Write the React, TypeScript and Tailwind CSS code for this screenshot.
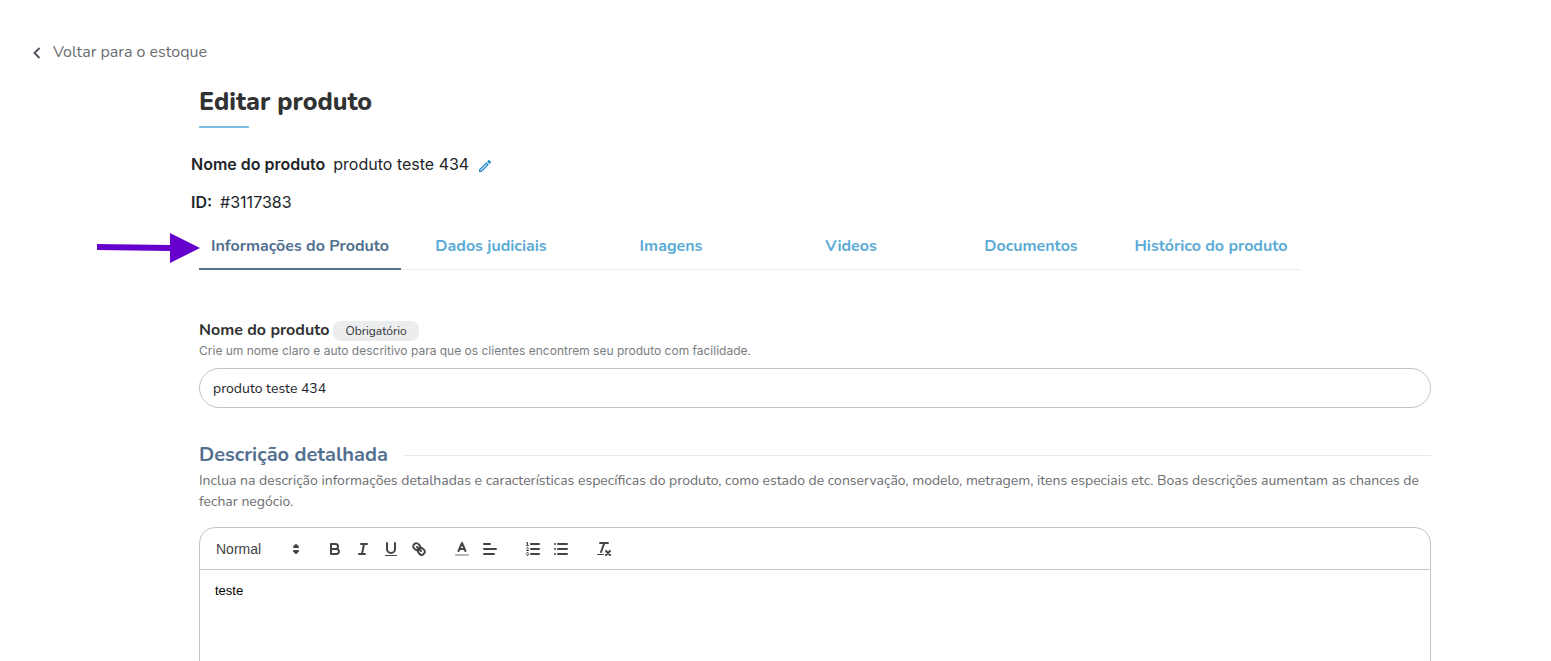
import React, { useState } from 'react';

const TABS = [
  'Informações do Produto',
  'Dados judiciais',
  'Imagens',
  'Videos',
  'Documentos',
  'Histórico do produto',
];

interface ToolButtonProps {
  label: string;
  children: React.ReactNode;
}

const ToolIcon: React.FC<{ children: React.ReactNode }> = ({ children }) => (
  <svg
    viewBox="0 0 18 18"
    className="h-[18px] w-[18px]"
    fill="none"
    stroke="#444"
    strokeWidth="2"
    strokeLinecap="round"
    strokeLinejoin="round"
  >
    {children}
  </svg>
);

const ToolButton: React.FC<ToolButtonProps> = ({ label, children }) => (
  <button
    type="button"
    aria-label={label}
    className="flex h-6 w-7 items-center justify-center"
  >
    <ToolIcon>{children}</ToolIcon>
  </button>
);

const EditorToolbar: React.FC = () => (
  <div className="flex gap-[15px] border-b border-[#c4c4c4] px-2 pb-2 pt-[9px] font-['Liberation_Sans',sans-serif]">
    <div className="relative w-[98px]">
      <select
        aria-label="Formato"
        defaultValue="normal"
        className="h-6 w-full appearance-none bg-transparent pl-2 text-sm text-[#444] focus:outline-none"
      >
        <option value="h1">Heading 1</option>
        <option value="h2">Heading 2</option>
        <option value="normal">Normal</option>
      </select>
      <span className="pointer-events-none absolute inset-y-0 right-px flex items-center">
        <ToolIcon>
          <polygon fill="#444" points="7 11 9 13 11 11 7 11" />
          <polygon fill="#444" points="7 7 9 5 11 7 7 7" />
        </ToolIcon>
      </span>
    </div>

    <div className="flex">
      <ToolButton label="Negrito">
        <path d="M5,4H9.5A2.5,2.5,0,0,1,12,6.5v0A2.5,2.5,0,0,1,9.5,9H5V4Z" />
        <path d="M5,9h5.5A2.5,2.5,0,0,1,13,11.5v0A2.5,2.5,0,0,1,10.5,14H5V9Z" />
      </ToolButton>
      <ToolButton label="Itálico">
        <path d="M7 4H13M5 14H11M8 14L10 4" />
      </ToolButton>
      <ToolButton label="Sublinhado">
        <path d="M5,3V9a4,4,0,0,0,4,4h0a4,4,0,0,0,4-4V3" />
        <rect fill="#444" stroke="none" x="3" y="15" width="12" height="1" rx="0.5" />
      </ToolButton>
      <ToolButton label="Link">
        <path d="M7 7L11 11" />
        <path d="M8.9,4.577a3.476,3.476,0,0,1,.36,4.679A3.476,3.476,0,0,1,4.577,8.9C3.185,7.5,2.035,6.4,4.217,4.217S7.5,3.185,8.9,4.577Z" />
        <path d="M13.423,9.1a3.476,3.476,0,0,0-4.679-.36,3.476,3.476,0,0,0,.36,4.679c1.392,1.392,2.5,2.542,4.679.36S14.815,10.5,13.423,9.1Z" />
      </ToolButton>
    </div>

    <div className="flex">
      <ToolButton label="Cor do texto">
        <path strokeOpacity="0.4" d="M3 15H15" />
        <path d="M5.5 11L9 3L12.5 11M11.63 9H6.38" />
      </ToolButton>
      <ToolButton label="Alinhamento">
        <path d="M3 9H15M3 14H13M3 4H9" />
      </ToolButton>
    </div>

    <div className="flex">
      <ToolButton label="Lista numerada">
        <path d="M7 4H15M7 9H15M7 14H15" />
        <path strokeWidth="1" d="M2.5 5.5H4.5" />
        <path
          fill="#444"
          stroke="none"
          d="M3.5,6A0.5,0.5,0,0,1,3,5.5V3.085l-0.276.138A0.5,0.5,0,0,1,2.053,3c-0.124-.247-0.023-0.324.224-0.447l1-.5A0.5,0.5,0,0,1,4,2.5v3A0.5,0.5,0,0,1,3.5,6Z"
        />
        <path
          strokeWidth="1"
          d="M4.5,10.5h-2c0-.234,1.85-1.076,1.85-2.234A0.959,0.959,0,0,0,2.5,8.156"
        />
        <path
          strokeWidth="1"
          d="M2.5,14.846a0.959,0.959,0,0,0,1.85-.109A0.7,0.7,0,0,0,3.75,14a0.688,0.688,0,0,0,.6-0.736,0.959,0.959,0,0,0-1.85-.109"
        />
      </ToolButton>
      <ToolButton label="Lista com marcadores">
        <path d="M6 4H15M6 9H15M6 14H15M3 4H3M3 9H3M3 14H3" />
      </ToolButton>
    </div>

    <ToolButton label="Limpar formatação">
      <path d="M5 3H13M6 12L9.35 3M11 11L15 15M15 11L11 15" />
      <rect fill="#444" stroke="none" x="2" y="14" width="7" height="1" rx="0.5" />
    </ToolButton>
  </div>
);

const ProductTabs: React.FC = () => {
  const [active, setActive] = useState(TABS[0]);

  return (
    <div className="relative mt-2 max-w-[1102px]">
      <svg
        viewBox="0 0 104 30"
        aria-hidden="true"
        className="absolute right-full top-[11px] h-[30px] w-[104px] translate-x-px"
      >
        <path d="M1 11L74 12V0L104 15L74 30V18L1 17Z" fill="#6600cc" />
      </svg>
      <div
        role="tablist"
        className="grid grid-cols-[202px_repeat(5,1fr)] border-b border-[#eeeeee]"
      >
        {TABS.map((tab) => (
          <button
            key={tab}
            type="button"
            role="tab"
            aria-selected={tab === active}
            onClick={() => setActive(tab)}
            className={
              tab === active
                ? '-mb-px whitespace-nowrap border-b-2 border-[#52708f] pb-2.5 pt-3 text-base font-bold text-[#52708f]'
                : '-mb-px whitespace-nowrap border-b-2 border-transparent pb-2.5 pt-3 text-base font-bold text-[#5aabd6]'
            }
          >
            {tab}
          </button>
        ))}
      </div>
    </div>
  );
};

export default function App() {
  const [name, setName] = useState('produto teste 434');

  return (
    <div className="bg-white font-[Nunito,'Open_Sans',sans-serif] text-[#303233]">
      <div className="pl-8 pt-10">
        <a href="#" className="inline-flex h-6 items-center gap-[11px] text-base text-[#6b6d70]">
          <svg viewBox="0 0 10 14" className="h-3.5 w-2.5" fill="none" stroke="#55585e" strokeWidth="2">
            <path d="M7.5 3L2.5 8L7.5 13" />
          </svg>
          Voltar para o estoque
        </a>
      </div>

      <main className="pb-10 pl-[199px] pr-[120px]">
        <h1 className="mt-[18px] text-[25px] font-extrabold leading-9">Editar produto</h1>
        <div className="mt-1.5 h-0.5 w-[50px] bg-[#7fbde3]" />

        <div className="-ml-2 mt-6 font-[Inter,sans-serif] text-base text-[#212529]">
          <p className="flex items-center">
            <span className="mr-2 font-semibold">Nome do produto</span>
            produto teste 434
            <button type="button" aria-label="Editar nome" className="ml-2 pt-1">
              <svg viewBox="0 0 24 24" className="h-4 w-4" fill="#1c87c9">
                <path d="m14.06 9.02.92.92L5.92 19H5v-.92l9.06-9.06M17.66 3c-.25 0-.51.1-.7.29l-1.83 1.83 3.75 3.75 1.83-1.83c.39-.39.39-1.02 0-1.41l-2.34-2.34c-.2-.2-.45-.29-.71-.29zm-3.6 3.19L3 17.25V21h3.75L17.81 9.94l-3.75-3.75z" />
              </svg>
            </button>
          </p>
          <p className="mt-3.5">
            <span className="mr-2 font-semibold">ID:</span>
            #3117383
          </p>
        </div>

        <ProductTabs />

        <div className="mt-12 flex items-end gap-1">
          <label htmlFor="product-name" className="text-base font-bold">
            Nome do produto
          </label>
          <span className="mb-px rounded-lg bg-[#ebedef] px-3 text-xs leading-5">Obrigatório</span>
        </div>
        <p className="font-[Inter,sans-serif] text-xs leading-[18px] text-[#7a7d80]">
          Crie um nome claro e auto descritivo para que os clientes encontrem seu produto com
          facilidade.
        </p>
        <input
          id="product-name"
          type="text"
          value={name}
          onChange={(e) => setName(e.target.value)}
          className="mt-2 h-10 w-full rounded-full border border-[#c4c4c4] px-[13px] text-sm text-[#212529] focus:outline-none"
        />

        <div className="mt-8 flex items-center gap-[15px]">
          <h2 className="text-xl font-bold leading-[30px] text-[#52708f]">Descrição detalhada</h2>
          <div className="h-px flex-1 bg-[#e9e9e9]" />
        </div>
        <p className="text-sm leading-[21px] text-[#6b6d70]">
          Inclua na descrição informações detalhadas e características específicas do produto, como
          estado de conservação, modelo, metragem, itens especiais etc. Boas descrições aumentam as
          chances de fechar negócio.
        </p>

        <div className="mt-[15px] rounded-t-2xl border border-[#c4c4c4]">
          <EditorToolbar />
          <div
            contentEditable
            suppressContentEditableWarning
            role="textbox"
            aria-label="Descrição detalhada"
            className="min-h-[200px] px-[15px] py-3 font-['Liberation_Sans',sans-serif] text-[13px] leading-[18px] text-black focus:outline-none"
          >
            teste
          </div>
        </div>
      </main>
    </div>
  );
}
